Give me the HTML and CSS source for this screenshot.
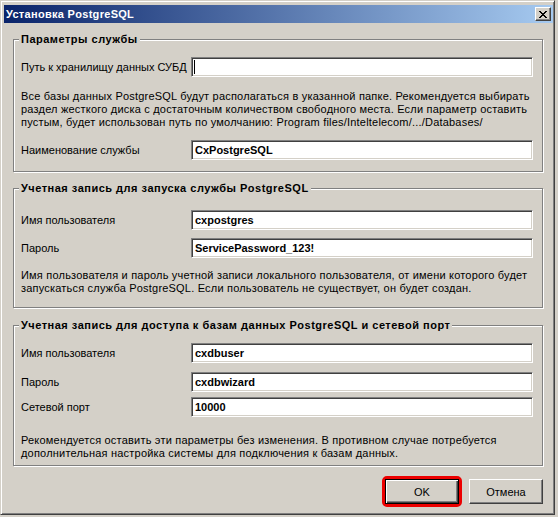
FILE: index.html
```html
<!DOCTYPE html>
<html lang="ru">
<head>
<meta charset="utf-8">
<title>Установка PostgreSQL</title>
<link rel="stylesheet" href="styles.css">
</head>
<body>
<div class="window">
  <div class="titlebar">
    <span class="title">Установка PostgreSQL</span>
    <span class="close"><svg width="8" height="7" viewBox="0 0 8 7"><path d="M0 0h2v1h1v1h2v-1h1v-1h2v1h-1v1h-1v1h-1v1h1v1h1v1h1v1h-2v-1h-1v-1h-2v1h-1v1h-2v-1h1v-1h1v-1h1v-1h-1v-1h-1v-1h-1z" fill="#000"/></svg></span>
  </div>
  <div class="content">
    <div class="group g1">
      <div class="legend">Параметры службы</div>
      <div class="row first">
        <span class="label">Путь к хранилищу данных СУБД</span>
        <div class="input"><span class="caret"></span></div>
      </div>
      <p class="note n1">Все базы данных PostgreSQL будут располагаться в указанной папке. Рекомендуется выбирать<br>раздел жесткого диска с достаточным количеством свободного места. Если параметр оставить<br>пустым, будет использован путь по умолчанию: Program files/Inteltelecom/.../Databases/</p>
      <div class="row r-after-note">
        <span class="label">Наименование службы</span>
        <div class="input">CxPostgreSQL</div>
      </div>
    </div>

    <div class="group g2">
      <div class="legend">Учетная запись для запуска службы PostgreSQL</div>
      <div class="row first">
        <span class="label">Имя пользователя</span>
        <div class="input">cxpostgres</div>
      </div>
      <div class="row r-next">
        <span class="label">Пароль</span>
        <div class="input">ServicePassword_123!</div>
      </div>
      <p class="note n2">Имя пользователя и пароль учетной записи локального пользователя, от имени которого будет<br>запускаться служба PostgreSQL. Если пользователь не существует, он будет создан.</p>
    </div>

    <div class="group g3">
      <div class="legend">Учетная запись для доступа к базам данных PostgreSQL и сетевой порт</div>
      <div class="row first">
        <span class="label">Имя пользователя</span>
        <div class="input">cxdbuser</div>
      </div>
      <div class="row r-next">
        <span class="label">Пароль</span>
        <div class="input">cxdbwizard</div>
      </div>
      <div class="row r-port">
        <span class="label">Сетевой порт</span>
        <div class="input">10000</div>
      </div>
      <p class="note n3">Рекомендуется оставить эти параметры без изменения. В противном случае потребуется<br>дополнительная настройка системы для подключения к базам данных.</p>
    </div>
  </div>
  <div class="buttons">
    <span class="highlight"><button class="btn default">OK</button></span>
    <button class="btn">Отмена</button>
  </div>
</div>
</body>
</html>
```
FILE: styles.css
```css
* { box-sizing: border-box; }
html, body { margin: 0; padding: 0; }
body {
  width: 558px;
  height: 517px;
  overflow: hidden;
  background: #d4d0c8;
  font-family: "Liberation Sans", Arial, sans-serif;
  font-size: 11px;
  color: #000;
}
.window {
  width: 555px;
  height: 515px;
  background: #d4d0c8;
  border: 1px solid;
  border-color: #d4d0c8 #404040 #404040 #d4d0c8;
  box-shadow: inset 1px 1px 0 #fff, inset -1px -1px 0 #808080;
  padding: 4px 1px 0 3px;
  display: flex;
  flex-direction: column;
}
.titlebar {
  height: 18px;
  background: linear-gradient(to right, #0a246a, #a6caf0);
  display: flex;
  align-items: center;
  justify-content: space-between;
  padding: 0 2px 0 2px;
  color: #fff;
  font-weight: bold;
  font-size: 11px;
}
.title { line-height: 13px; letter-spacing: 0.3px; }
.close {
  width: 16px;
  height: 14px;
  background: #d4d0c8;
  border: 1px solid;
  border-color: #fff #404040 #404040 #fff;
  box-shadow: inset -1px -1px 0 #808080;
  display: flex;
  align-items: center;
  justify-content: center;
}
.close svg { display: block; margin-left: -1px; }
.content {
  padding: 0 10px 0 9px;
  display: flex;
  flex-direction: column;
}
.group {
  border: 1px solid #808080;
  box-shadow: 1px 1px 0 #fff, inset 1px 1px 0 #fff;
  display: flex;
  flex-direction: column;
  padding: 0 9px 11px 7px;
}
.g1 { margin-top: 16px; }
.g2 { margin-top: 16px; padding-bottom: 12px; }
.g3 { margin-top: 17px; padding-bottom: 5px; }
.legend {
  align-self: flex-start;
  margin: -7px 0 0 -2px;
  padding: 0 2px;
  background: #d4d0c8;
  font-weight: bold;
  line-height: 13px;
  white-space: nowrap;
  letter-spacing: 0.5px;
}
.row {
  display: flex;
  align-items: center;
  height: 20px;
}
.g1 .first { margin-top: 11px; }
.g2 .first { margin-top: 15px; }
.g3 .first { margin-top: 11px; }
.r-after-note { margin-top: 11px; }
.r-next { margin-top: 8px; }
.g3 .r-next { margin-top: 9px; }
.r-port { margin-top: 5px; }
.label {
  width: 170px;
  flex: none;
  white-space: nowrap;
}
.input {
  flex: 1;
  height: 20px;
  background: #fff;
  border: 1px solid;
  border-color: #808080 #fff #fff #808080;
  box-shadow: inset 1px 1px 0 #404040, inset -1px -1px 0 #d4d0c8;
  font-weight: bold;
  display: flex;
  align-items: center;
  padding: 0 0 0 3px;
  line-height: 13px;
}
.caret {
  display: block;
  width: 1px;
  height: 14px;
  background: #000;
  margin-left: -1px;
}
.note {
  margin: 13px 0 0;
  line-height: 13px;
  white-space: nowrap;
  letter-spacing: 0.2px;
}
.n2 { margin-top: 11px; }
.n3 { margin-top: 17px; }
.buttons {
  display: flex;
  justify-content: flex-end;
  align-items: center;
  gap: 7px;
  padding: 0 10px 0 0;
  margin-top: 10px;
}
.highlight {
  display: flex;
  border: 3px solid #ec0000;
  border-radius: 5px;
}
.btn {
  width: 74px;
  height: 25px;
  margin: 0;
  padding: 0;
  font-family: "Liberation Sans", Arial, sans-serif;
  font-size: 11px;
  color: #000;
  background: #d4d0c8;
  border: 1px solid;
  border-color: #fff #404040 #404040 #fff;
  box-shadow: inset -1px -1px 0 #808080, inset 1px 1px 0 #d4d0c8;
  border-radius: 0;
}
.btn.default {
  border: 1px solid #000;
  box-shadow: inset 1px 1px 0 #fff, inset -1px -1px 0 #404040, inset -2px -2px 0 #808080;
}
```
